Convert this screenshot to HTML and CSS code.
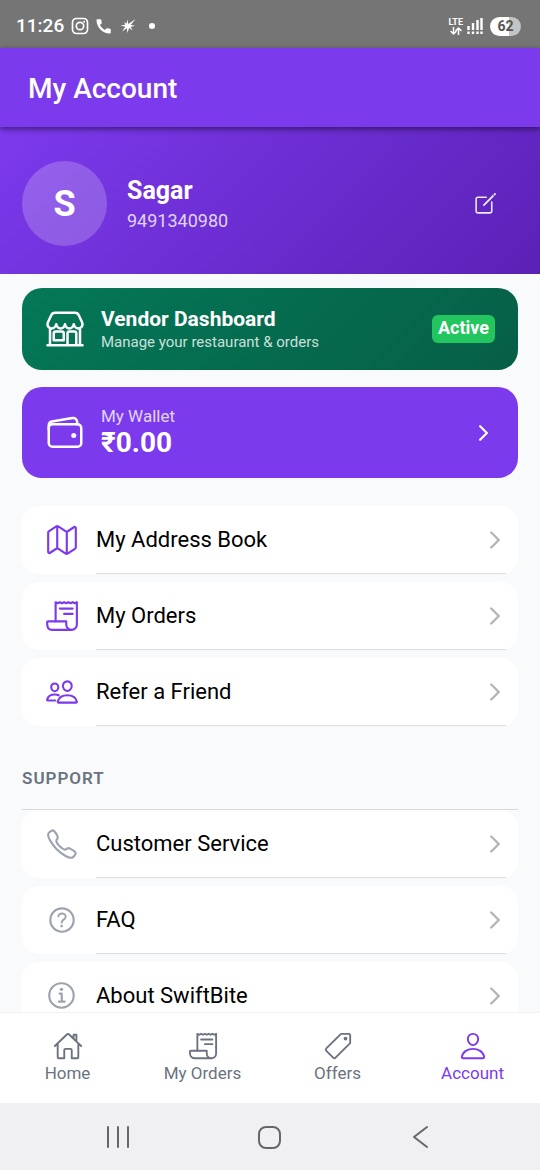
FILE: index.html
```html
<!DOCTYPE html>
<html lang="en">
<head>
<meta charset="utf-8">
<meta name="viewport" content="width=device-width, initial-scale=1">
<title>My Account</title>
<link rel="stylesheet" href="styles.css">
</head>
<body>
<svg class="sprite" aria-hidden="true">
  <symbol id="receipt" viewBox="0 0 512 512"><path d="M160 336V48l32 16 32-16 32 16 32-16 32 16 32-16 32 16 32-16 32 16 32-16v224"/><path d="M480 272v112a80 80 0 01-80 80 80 80 0 01-80-80v-48H48a15.860 15.860 0 00-16 16c0 64 6.740 112 80 112h288M224 144h192M288 224h128"/></symbol>
  <symbol id="chevron" viewBox="160 88 192 336"><path d="M184 112l144 144-144 144" stroke-width="46"/></symbol>
</svg>
<div class="app">
  <div class="status">
    <div class="status-group">
      <span class="clock">11:26</span>
      <svg class="status-icon" viewBox="0 0 18 18"><rect x="1.500" y="1.500" width="15" height="15" rx="4" stroke-width="1.700"/><circle cx="9" cy="9" r="3.700" stroke-width="1.700"/><circle class="solid" cx="13.200" cy="4.800" r="1"/></svg>
      <svg class="status-icon" viewBox="0 0 24 24"><path class="solid" d="M20 15.500c-1.200 0-2.500-.2-3.600-.6-.3-.1-.7 0-1 .2l-2.200 2.200c-2.800-1.400-5.100-3.800-6.600-6.600l2.200-2.200c.3-.3.400-.7.200-1C8.700 6.500 8.500 5.200 8.500 4c0-.5-.5-1-1-1H3c-.5 0-1 .5-1 1 0 9.900 8.100 18 18 18 .5 0 1-.5 1-1v-4.500c0-.5-.5-1-1-1z"/></svg>
      <svg class="status-icon" viewBox="0 0 18 18"><path class="solid" d="M8.300 2.500l1 4.600 7.200-5-4.800 6 4.300.7-4.400 1.200 1.900 3.600-3.400-2.600-1.700 5-.6-4.800-4.800 3.300 3.400-4.800L1.500 8.600l4.900-.8L5 5l2.500 1.800z"/></svg>
      <span class="dot"></span>
    </div>
    <div class="status-group signal-group">
      <div class="lte"><span>LTE</span><svg viewBox="0 0 12 8"><path d="M3.500 0v7M1 4.500L3.500 7 6 4.500M8.500 8V1M6 3.500L8.500 1 11 3.500" stroke-width="1.500"/></svg></div>
      <svg class="bars" viewBox="0 0 16 18"><path d="M1.500 9v4M6 6v7M10.500 3v10M14.500 1v12" stroke-width="2.400"/><path d="M1.500 14.500V17M6 14.500V17M10.500 14.500V17M14.500 14.500V17" stroke-width="2.400"/></svg>
      <span class="battery">62</span>
    </div>
  </div>

  <header class="header"><h1>My Account</h1></header>

  <main class="content">
    <section class="profile">
      <div class="avatar">S</div>
      <div class="who">
        <h2>Sagar</h2>
        <p>9491340980</p>
      </div>
      <button class="edit" type="button" aria-label="Edit profile">
        <svg viewBox="0 0 512 512"><path d="M384 224v184a40 40 0 01-40 40H104a40 40 0 01-40-40V168a40 40 0 0140-40h167.480"/><path class="pencil" d="M459.940 53.250a16.060 16.060 0 00-23.220-.560L424.350 65a8 8 0 000 11.310l11.340 11.320a8 8 0 0011.340 0l12.060-12c6.100-6.090 6.670-16.010.850-22.380zM399.340 90L218.820 270.200a9 9 0 00-2.310 3.930L208.160 299a3.910 3.910 0 004.860 4.860l24.850-8.350a9 9 0 003.930-2.310L422 112.660a9 9 0 000-12.660l-9.950-10a9 9 0 00-12.710 0z"/></svg>
      </button>
    </section>

    <div class="page">
      <button class="card vendor" type="button">
        <svg class="card-icon" viewBox="0 0 512 512"><path d="M64 464V250M448 250v214M32 464h448M382.500 48h-253c-21.800 0-41.500 12-49.900 32L36.300 173.800c-14.600 34.600 10 74.200 47.500 74.200 30 0 57.400-24 60.200-54 2.800 30 27 54 56 54s53-24 56-54c3 30 27 54 56 54s53.200-24 56-54c2.800 30 30.200 54 60.200 54 37.500 0 62.100-39.600 47.500-74.200L432.400 80c-8.400-20-28.100-32-49.900-32zM136 288h80a24 24 0 0124 24v88H112v-88a24 24 0 0124-24zM288 464V312a24 24 0 0124-24h64a24 24 0 0124 24v152"/></svg>
        <span class="card-text">
          <span class="vendor-title">Vendor Dashboard</span>
          <span class="vendor-note">Manage your restaurant &amp; orders</span>
        </span>
        <span class="badge">Active</span>
      </button>

      <button class="card wallet" type="button">
        <svg class="card-icon" viewBox="0 0 512 512"><rect x="48" y="144" width="416" height="288" rx="48"/><path d="M411.360 144v-30A50 50 0 00352 64.900L88.640 109.850A50 50 0 0048 159v49"/><circle class="solid" cx="368" cy="288" r="32"/></svg>
        <span class="card-text">
          <span class="wallet-label">My Wallet</span>
          <span class="wallet-sum">₹0.00</span>
        </span>
        <svg class="wallet-chevron"><use href="#chevron"/></svg>
      </button>

      <nav class="list accent" aria-label="Account">
        <a class="item" href="#address">
          <svg class="item-icon" viewBox="0 0 512 512"><path d="M313.270 124.640L198.730 51.360a32 32 0 00-29.280.350L56.510 127.490A16 16 0 0048 141.630v295.800a16 16 0 0023.490 14.140l97.820-63.790a32 32 0 0129.500-.240l111.860 73a32 32 0 0029.270-.110l115.430-75.940a16 16 0 008.630-14.200V74.570a16 16 0 00-23.490-14.140l-98 63.860a32 32 0 01-29.240.350zM328 128v336M184 48v336"/></svg>
          <span class="item-body"><span>My Address Book</span><svg class="item-chevron"><use href="#chevron"/></svg></span>
        </a>
        <a class="item" href="#orders">
          <svg class="item-icon"><use href="#receipt"/></svg>
          <span class="item-body"><span>My Orders</span><svg class="item-chevron"><use href="#chevron"/></svg></span>
        </a>
        <a class="item" href="#refer">
          <svg class="item-icon" viewBox="0 0 512 512"><path d="M402 168c-2.930 40.670-33.100 72-66 72s-63.120-31.320-66-72c-3-42.310 26.370-72 66-72s69 30.460 66 72zM336 304c-65.170 0-127.840 32.370-143.540 95.410-2.080 8.340 3.150 16.590 11.720 16.590h263.650c8.570 0 13.770-8.250 11.720-16.590C463.850 335.360 401.180 304 336 304zM200 185.940c-2.340 32.480-26.720 58.060-53 58.060s-50.700-25.570-53-58.060C91.610 152.150 115.340 128 147 128s55.390 24.770 53 57.940zM206 306c-18.050-8.270-37.930-11.450-59-11.450-52 0-102.100 25.850-114.650 76.200-1.650 6.660 2.530 13.250 9.370 13.250H154"/></svg>
          <span class="item-body"><span>Refer a Friend</span><svg class="item-chevron"><use href="#chevron"/></svg></span>
        </a>
      </nav>

      <h3 class="section-title">SUPPORT</h3>
      <nav class="list" aria-label="Support">
        <a class="item" href="#service">
          <svg class="item-icon" viewBox="0 0 512 512"><path d="M451 374c-15.880-16-54.340-39.350-73-48.760-24.300-12.240-26.300-13.240-45.400.950-12.740 9.470-21.210 17.930-36.120 14.750s-47.310-21.110-75.680-49.390-47.340-61.620-50.530-76.480 5.410-23.230 14.790-36c13.220-18 12.220-21 .920-45.300-8.810-18.900-32.840-57-48.900-72.800C119.900 44 119.900 47 108.830 51.600A160.150 160.150 0 0083 65.370C67 76 58.120 84.830 51.910 98.100s-9 44.380 23.070 102.640 54.570 88.050 101.140 134.490S258.500 406.640 310.850 436c64.760 36.270 89.600 29.200 102.910 23s22.180-15 32.830-31a159.090 159.090 0 0013.800-25.800C465 391.170 468 391.170 451 374z"/></svg>
          <span class="item-body"><span>Customer Service</span><svg class="item-chevron"><use href="#chevron"/></svg></span>
        </a>
        <a class="item" href="#faq">
          <svg class="item-icon" viewBox="0 0 512 512"><circle cx="256" cy="256" r="176"/><path d="M200 202.290s.840-17.500 19.570-32.570C230.680 160.770 244 158.180 256 158c10.930-.140 20.690 1.670 26.530 4.450 10 4.760 29.470 16.380 29.470 41.090 0 26-17 37.810-36.370 50.800S251 281.430 251 296" stroke-width="28"/><circle class="solid" cx="250" cy="348" r="20"/></svg>
          <span class="item-body"><span>FAQ</span><svg class="item-chevron"><use href="#chevron"/></svg></span>
        </a>
        <a class="item" href="#about">
          <svg class="item-icon" viewBox="0 0 512 512"><circle cx="248" cy="248" r="184"/><path d="M220 220h32v116M208 340h88"/><circle class="solid" cx="248" cy="156" r="26"/></svg>
          <span class="item-body"><span>About SwiftBite</span><svg class="item-chevron"><use href="#chevron"/></svg></span>
        </a>
      </nav>
    </div>
  </main>

  <nav class="tabs" aria-label="Main">
    <a class="tab" href="#home"><svg viewBox="0 0 512 512"><path d="M80 212v236a16 16 0 0016 16h96V328a24 24 0 0124-24h80a24 24 0 0124 24v136h96a16 16 0 0016-16V212M480 256L266.890 52c-5-5.280-16.690-5.340-21.780 0L32 256M400 179V64h-48v69"/></svg>Home</a>
    <a class="tab" href="#my-orders"><svg><use href="#receipt"/></svg>My Orders</a>
    <a class="tab" href="#offers"><svg viewBox="0 0 512 512"><path d="M435.250 48h-122.900a14.460 14.460 0 00-10.200 4.200L56.450 297.900a28.850 28.850 0 000 40.700l117 117a28.850 28.850 0 0040.700 0L459.750 210a14.460 14.460 0 004.200-10.200v-123a28.660 28.660 0 00-28.700-28.800z"/><circle class="solid" cx="384" cy="128" r="32"/></svg>Offers</a>
    <a class="tab selected" href="#account" aria-current="page"><svg viewBox="0 0 512 512"><path d="M344 144c-3.920 52.870-44 96-88 96s-84.150-43.120-88-96c-4-55 35-96 88-96s92 42 88 96zM256 304c-87 0-175.300 48-191.640 138.600C62.390 453.520 68.570 464 80 464h352c11.440 0 17.620-10.480 15.650-21.400C431.300 352 343 304 256 304z"/></svg>Account</a>
  </nav>

  <div class="system-nav">
    <button type="button" aria-label="Recent apps"><svg viewBox="0 0 24 24"><path d="M3 2v20M13 2v20M23 2v20" stroke-width="2"/></svg></button>
    <button type="button" aria-label="Home"><svg viewBox="0 0 24 24"><rect x="2" y="2" width="21" height="21" rx="7" stroke-width="2"/></svg></button>
    <button type="button" aria-label="Back"><svg viewBox="0 0 24 24"><path d="M18 2L5 12l13 10" stroke-width="2"/></svg></button>
  </div>
</div>
</body>
</html>
```
FILE: styles.css
```css
* { box-sizing: border-box; }

body {
  margin: 0;
  font-family: Roboto, "Noto Sans", sans-serif;
  background: #f8fafc;
  color: #000;
}

h1, h2, h3, p { margin: 0; }
a { color: inherit; text-decoration: none; }

button {
  border: 0;
  padding: 0;
  background: none;
  font: inherit;
  color: inherit;
  text-align: left;
  cursor: pointer;
}

svg {
  display: block;
  flex: none;
  fill: none;
  stroke: currentColor;
  stroke-width: 32px;
  stroke-linecap: round;
  stroke-linejoin: round;
}

.solid { fill: currentColor; stroke: none; }
.sprite { position: absolute; width: 0; height: 0; }

.app {
  display: flex;
  flex-direction: column;
  height: 100vh;
}

/* Status bar */
.status {
  display: flex;
  flex: none;
  justify-content: space-between;
  align-items: center;
  height: 48px;
  padding: 4px 19px 0 16px;
  background: #757575;
  color: #fff;
}
.status-group { display: flex; align-items: center; gap: 6px; }
.clock { margin-right: 1px; font-size: 19px; line-height: 24px; font-weight: 500; }
.status-icon { width: 18px; height: 18px; }
.dot { width: 6px; height: 6px; margin-left: 6px; border-radius: 50%; background: #fff; }
.signal-group { gap: 4px; }
.lte { display: flex; flex-direction: column; align-items: center; font-size: 9px; line-height: 9px; font-weight: 700; }
.lte svg { width: 12px; height: 8px; }
.bars { width: 16px; height: 18px; }
.bars path { stroke-linecap: butt; }
.battery {
  width: 31px;
  margin-left: 3px;
  border-radius: 10px;
  background: linear-gradient(90deg, #fff 62%, #c4c4c4 62%);
  color: #555;
  font-size: 14px;
  line-height: 19px;
  font-weight: 700;
  text-align: center;
}

/* Title bar */
.header {
  position: relative;
  z-index: 1;
  flex: none;
  padding: 23px 28px 20px;
  background: #7c3aed;
  color: #fff;
  box-shadow: 0 2px 6px rgba(0, 0, 0, 0.5);
}
.header h1 { font-size: 28px; line-height: 36px; font-weight: 500; }

.content {
  flex: 1;
  min-height: 0;
  overflow-y: auto;
  scrollbar-width: none;
}

/* Profile */
.profile {
  display: flex;
  align-items: center;
  gap: 20px;
  padding: 34px 42px 28px 22px;
  background: linear-gradient(135deg, #7c3aed, #5b21b6);
  color: #fff;
}
.avatar {
  width: 85px;
  padding-top: 1px;
  border-radius: 50%;
  background: rgba(255, 255, 255, 0.2);
  font-size: 36px;
  line-height: 84px;
  font-weight: 700;
  text-align: center;
}
.who { flex: 1; padding-top: 2px; }
.who h2 { font-size: 25px; line-height: 32px; font-weight: 700; }
.who p { font-size: 18px; line-height: 28px; color: rgba(255, 255, 255, 0.8); }
.edit { opacity: 0.9; }
.edit svg { width: 25px; height: 25px; }
.pencil { fill: currentColor; stroke-width: 10px; }

/* Cards */
.page { padding: 14px 22px 0; }
.card {
  display: flex;
  align-items: center;
  gap: 16px;
  width: 100%;
  padding: 16px 23px;
  border-radius: 20px;
  color: #fff;
}
.card + .card { margin-top: 17px; }
.card-icon { width: 40px; height: 40px; }
.card-text { display: flex; flex: 1; flex-direction: column; }
.vendor { background: linear-gradient(135deg, #047857, #065f46); }
.vendor-title { padding-top: 1px; font-size: 21px; line-height: 28px; font-weight: 700; }
.vendor-note { font-size: 15px; line-height: 18px; padding-bottom: 3px; color: rgba(255, 255, 255, 0.8); }
.badge {
  padding: 2px 6px 4px;
  border-radius: 6px;
  background: #22c55e;
  font-size: 18px;
  line-height: 22px;
  font-weight: 700;
}
.wallet { background: #7c3aed; }
.wallet-label { font-size: 17px; line-height: 26px; color: rgba(255, 255, 255, 0.8); }
.wallet-sum { font-size: 28px; line-height: 28px; padding-bottom: 5px; font-weight: 700; }
.wallet-chevron { width: 9px; height: 16px; margin-right: 7px; }

/* Menu lists */
.list { display: flex; flex-direction: column; gap: 8px; color: #9ca3af; }
.accent { margin-top: 28px; color: #7c3aed; }
.item {
  display: flex;
  align-items: stretch;
  gap: 17px;
  padding: 0 12px 0 23px;
  border-radius: 17px;
  background: #fff;
}
.item-icon { align-self: center; width: 34px; height: 34px; }
.item-body {
  display: flex;
  flex: 1;
  justify-content: space-between;
  align-items: center;
  padding: 19px 6px 18px 0;
  border-bottom: 1px solid #dcdcdc;
  color: #000;
  font-size: 22px;
  line-height: 30px;
}
.item-chevron { width: 10px; height: 18px; color: #b5b5b5; }
.section-title {
  padding: 40px 0 19px;
  border-bottom: 1px solid #d5dadd;
  color: #6b7280;
  font-size: 17px;
  line-height: 24px;
  font-weight: 600;
  letter-spacing: 1px;
}

/* Tab bar */
.tabs {
  display: grid;
  flex: none;
  grid-template-columns: repeat(4, 1fr);
  padding: 18px 0 19px;
  border-top: 1px solid #f1f1f2;
  background: #fff;
  color: #6b7280;
}
.tab {
  display: flex;
  flex-direction: column;
  align-items: center;
  gap: 2px;
  font-size: 17px;
  line-height: 21px;
}
.tab svg { width: 30px; height: 30px; }
.selected { color: #7c3aed; }

/* System navigation */
.system-nav {
  display: flex;
  flex: none;
  justify-content: space-around;
  align-items: center;
  height: 67px;
  padding: 0 43px 0 41px;
  background: #f0f0f2;
  color: #666;
}
.system-nav svg { width: 24px; height: 24px; }
```
